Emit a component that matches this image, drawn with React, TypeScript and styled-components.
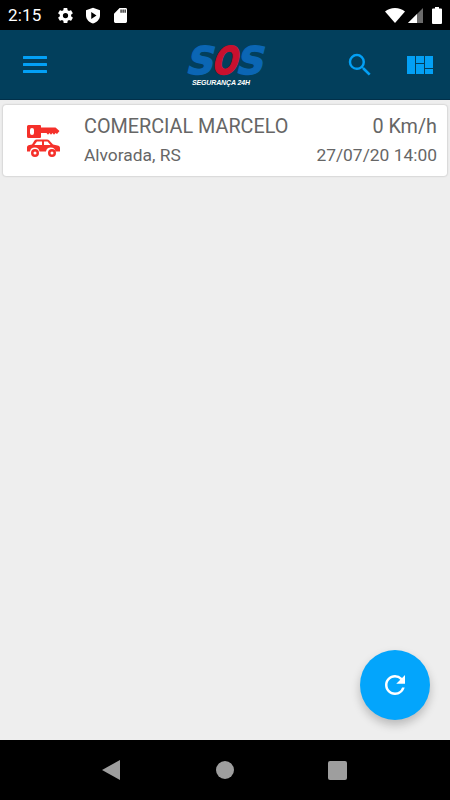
import styled, { createGlobalStyle } from "styled-components";

const GlobalStyle = createGlobalStyle`
  html, body {
    margin: 0;
    padding: 0;
    background: #eeeeee;
    font-family: Roboto, "Liberation Sans", sans-serif;
  }
  * { box-sizing: border-box; }
`;

const Screen = styled.div`
  width: 450px;
  height: 800px;
  display: flex;
  flex-direction: column;
  overflow: hidden;
  position: relative;
`;

const StatusBar = styled.div`
  height: 30px;
  background: #000;
  color: #fff;
  display: flex;
  align-items: center;
  justify-content: space-between;
  padding: 0 8px;
`;

const StatusGroup = styled.div`
  display: flex;
  align-items: center;
  gap: ${(p: { $gap: number }) => p.$gap}px;
`;

const Clock = styled.span`
  font-size: 17px;
  letter-spacing: 0.2px;
  margin-right: 3px;
`;

const Header = styled.header`
  height: 70px;
  background: #023f5c;
  border-bottom: 1px solid #01304a;
  display: flex;
  align-items: center;
  justify-content: space-between;
  padding: 0 17px 0 23px;
`;

const IconButton = styled.button`
  border: 0;
  background: none;
  padding: 0;
  display: flex;
  color: #03a0f5;
`;

const Logo = styled.svg`
  display: block;
  margin-left: 59px;
  margin-top: 3px;
  overflow: visible;
`;

const Actions = styled.div`
  display: flex;
  align-items: center;
  gap: 32px;
`;

const Content = styled.main`
  flex: 1;
  background: #eeeeee;
  padding: 5px 3px;
  position: relative;
`;

const Card = styled.div`
  height: 71px;
  background: #fff;
  border-radius: 3px;
  box-shadow: 0 0 2px rgba(0, 0, 0, 0.3);
  display: flex;
  align-items: center;
  padding: 0 10px 0 24px;
  color: #666666;
`;

const CardIcon = styled.div`
  width: 33px;
  margin-right: 24px;
  display: flex;
`;

const CardBody = styled.div`
  flex: 1;
  display: flex;
  flex-direction: column;
  gap: 9px;
`;

const Line = styled.div`
  display: flex;
  justify-content: space-between;
  align-items: baseline;
`;

const Title = styled.span`
  font-size: 19.8px;
  line-height: 21px;
`;

const Sub = styled.span`
  font-size: 17.4px;
  line-height: 19px;
`;

const Fab = styled.button`
  position: absolute;
  right: 20px;
  bottom: 20px;
  width: 70px;
  height: 70px;
  border: 0;
  padding: 0;
  border-radius: 50%;
  background: #03a5fc;
  box-shadow: 0 5px 10px rgba(0, 0, 0, 0.22);
  display: flex;
  align-items: center;
  justify-content: center;
`;

const NavBar = styled.nav`
  height: 60px;
  background: #000;
  display: flex;
  align-items: center;
  justify-content: center;
  padding-right: 2px;
`;

const NavSlot = styled.div`
  display: flex;
  margin-right: ${(p: { $after: number }) => p.$after}px;
`;

const KeyCarIcon = () => (
  <svg width="33" height="32" viewBox="0 0 33 32" fill="#f5302a">
    <path fillRule="evenodd" d="M1.500 0H13a1 1 0 0 1 1 1v11a1 1 0 0 1-1 1H1.500A1.500 1.500 0 0 1 0 11.500v-10A1.500 1.500 0 0 1 1.500 0ZM5 3a2 2 0 0 0-2 2v3a2 2 0 0 0 4 0V5a2 2 0 0 0-2-2Z" />
    <path d="M14 2.500h14.500l4 3.500-2.500 3-1.500-1-1.500 1.800-1.500-1.800-1.500 1.800-1.500-1.800-1.500 1.800-1.500-1.800H14Z" />
    <path fillRule="evenodd" d="M9.500 14.500H20c1 0 1.700.4 2.300 1l3.700 4 4.500 1c1.500.3 2.500 1.200 2.500 2.500v3.500h-4.500a4.800 4.800 0 0 0-9.500 0H12.500a4.800 4.800 0 0 0-9.500 0H0V22.500c0-1.300 1-2.200 2.500-2.500l2.500-.5 2.500-4c.5-.7 1.200-1 2-1ZM10 16.500l-2.700 3.500H15v-3.500h-5Zm7 0V20h6.500l-3-3.500H17Z" />
    <path fillRule="evenodd" d="M8 24a4 4 0 1 1 0 8 4 4 0 0 1 0-8Zm0 2.500a1.500 1.500 0 1 0 0 3 1.500 1.500 0 0 0 0-3ZM25 24a4 4 0 1 1 0 8 4 4 0 0 1 0-8Zm0 2.500a1.500 1.500 0 1 0 0 3 1.500 1.500 0 0 0 0-3Z" />
  </svg>
);

const logoFont = { fontFamily: '"DejaVu Sans", sans-serif', fontWeight: 700, fontSize: 38 };

export default function App() {
  return (
    <Screen>
      <GlobalStyle />
      <StatusBar>
        <StatusGroup $gap={13}>
          <Clock>2:15</Clock>
          <svg width="15" height="15" viewBox="2 2 20 20" fill="#fff">
            <path d="M19.400 13c.04-.3.1-.7.1-1s-.03-.7-.1-1l2.100-1.650c.2-.15.25-.4.1-.65l-2-3.450c-.1-.2-.4-.3-.6-.2l-2.500 1c-.5-.4-1-.7-1.700-1l-.4-2.650A.5.500 0 0 0 14 2h-4c-.25 0-.45.2-.5.400L9.100 5.050c-.6.25-1.200.6-1.700 1l-2.500-1c-.2-.1-.5 0-.6.2l-2 3.450c-.1.25-.1.5.1.65L4.500 11c0 .3-.1.700-.1 1s.03.700.1 1l-2.100 1.650c-.2.150-.25.400-.1.650l2 3.450c.1.200.4.300.6.200l2.500-1c.5.400 1 .700 1.700 1l.4 2.650c.05.200.25.400.5.400h4c.25 0 .45-.2.5-.4l.4-2.650c.6-.25 1.200-.6 1.700-1l2.500 1c.2.100.5 0 .6-.2l2-3.450c.1-.25.1-.5-.1-.65L19.400 13ZM12 15.500a3.500 3.500 0 1 1 0-7 3.500 3.500 0 0 1 0 7Z" />
          </svg>
          <svg width="14" height="17" viewBox="0 0 16 18" fill="#fff">
            <path fillRule="evenodd" d="M8 0l8 3v6c0 4.200-3.400 7.800-8 9-4.600-1.200-8-4.800-8-9V3l8-3ZM6 5v8l6-4-6-4Z" />
          </svg>
          <svg width="13" height="15" viewBox="0 0 14 16" fill="#fff" style={{ marginLeft: 1 }}>
            <path fillRule="evenodd" d="M6 0h6.500A1.500 1.500 0 0 1 14 1.500v13a1.500 1.500 0 0 1-1.500 1.500h-11A1.500 1.500 0 0 1 0 14.500V6l6-6Zm1 1.500v3.500h1.200V1.500H7Zm2.200 0v3.500h1.200V1.500H9.200Zm2.200 0v3.500h1.200V1.500h-1.200Z" />
          </svg>
        </StatusGroup>
        <StatusGroup $gap={9}>
          <svg width="20" height="15" viewBox="0 0 20 15" fill="#fff" style={{ marginRight: -6 }}>
            <path d="M0 3.500C2.700 1.300 6.200 0 10 0s7.300 1.300 10 3.500L10 15 0 3.500Z" />
          </svg>
          <svg width="15" height="15" viewBox="0 0 15 15">
            <path d="M15 0v15H0L15 0Z" fill="#6b6b6b" />
            <path d="M9 6v9H0l9-9Z" fill="#fff" />
          </svg>
          <svg width="10" height="17" viewBox="0 0 10 17" fill="#fff">
            <path d="M3 0h4v1.500h2a1 1 0 0 1 1 1V16a1 1 0 0 1-1 1H1a1 1 0 0 1-1-1V2.500a1 1 0 0 1 1-1h2V0Z" />
          </svg>
        </StatusGroup>
      </StatusBar>

      <Header>
        <IconButton aria-label="menu">
          <svg width="24" height="17" viewBox="0 0 24 17" fill="currentColor">
            <rect x="0" y="0" width="24" height="3" rx="0.5" />
            <rect x="0" y="7" width="24" height="3" rx="0.5" />
            <rect x="0" y="14" width="24" height="3" rx="0.5" />
          </svg>
        </IconButton>
        <Logo width="76" height="44" viewBox="0 0 76 44">
          <g style={logoFont} stroke="currentColor" strokeWidth="1.400">
            <text transform="translate(-3 30) skewX(-14) scale(1 1)" fill="#0b66b4" color="#0b66b4">S</text>
            <text transform="translate(47 30) skewX(-14) scale(1 1)" fill="#0b66b4" color="#0b66b4">S</text>
            <text transform="translate(23 30) skewX(-14) scale(.78 1)" fill="#c8102e" color="#c8102e">O</text>
          </g>
          <text x="4" y="41" fill="#fff" fontFamily='"Liberation Sans", sans-serif' fontStyle="italic" fontWeight="700" fontSize="7" textLength="58">
            SEGURANÇA 24H
          </text>
        </Logo>
        <Actions>
          <IconButton aria-label="buscar">
            <svg width="30" height="30" viewBox="0 0 24 24" fill="currentColor">
              <path d="M15.500 14h-.79l-.28-.27A6.471 6.471 0 0 0 16 9.500 6.500 6.500 0 1 0 9.500 16c1.610 0 3.090-.590 4.230-1.570l.27.28v.79l5 4.990L20.490 19l-4.990-5zm-6 0C7.010 14 5 11.990 5 9.500S7.010 5 9.500 5 14 7.010 14 9.500 11.990 14 9.500 14z" />
            </svg>
          </IconButton>
          <IconButton aria-label="painel">
            <svg width="26" height="18" viewBox="0 0 26 18" fill="currentColor">
              <rect x="0" y="0" width="8" height="18" />
              <rect x="9" y="0" width="8" height="7" />
              <rect x="9" y="8" width="8" height="10" />
              <rect x="18" y="0" width="8" height="12" />
              <rect x="18" y="13" width="8" height="5" />
            </svg>
          </IconButton>
        </Actions>
      </Header>

      <Content>
        <Card>
          <CardIcon>
            <KeyCarIcon />
          </CardIcon>
          <CardBody>
            <Line>
              <Title>COMERCIAL MARCELO</Title>
              <Title>0 Km/h</Title>
            </Line>
            <Line>
              <Sub>Alvorada, RS</Sub>
              <Sub>27/07/20 14:00</Sub>
            </Line>
          </CardBody>
        </Card>
        <Fab aria-label="atualizar">
          <svg width="30" height="30" viewBox="0 0 24 24" fill="#fff">
            <path d="M17.650 6.350A7.958 7.958 0 0 0 12 4c-4.420 0-7.990 3.580-7.990 8s3.570 8 7.990 8c3.730 0 6.840-2.550 7.730-6h-2.080A5.990 5.990 0 0 1 12 18c-3.310 0-6-2.690-6-6s2.690-6 6-6c1.660 0 3.140.690 4.220 1.780L13 11h7V4l-2.350 2.350z" />
          </svg>
        </Fab>
      </Content>

      <NavBar>
        <NavSlot $after={96}>
          <svg width="18" height="20" viewBox="0 0 18 20" fill="#9e9e9e">
            <path d="M18 0v20L0 10 18 0Z" />
          </svg>
        </NavSlot>
        <NavSlot $after={94}>
          <svg width="18" height="18" viewBox="0 0 18 18" fill="#9e9e9e">
            <circle cx="9" cy="9" r="9" />
          </svg>
        </NavSlot>
        <NavSlot $after={0}>
          <svg width="19" height="19" viewBox="0 0 19 19" fill="#9e9e9e">
            <rect width="19" height="19" rx="2" />
          </svg>
        </NavSlot>
      </NavBar>
    </Screen>
  );
}
